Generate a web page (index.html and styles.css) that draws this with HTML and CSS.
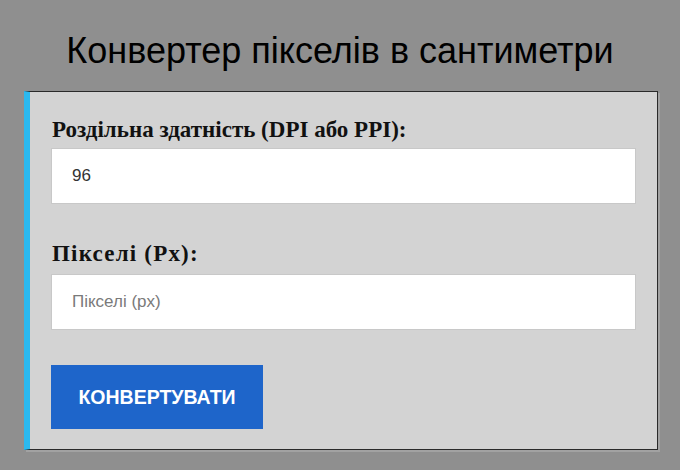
FILE: index.html
```html
<!DOCTYPE html>
<html lang="uk">
<head>
<meta charset="utf-8">
<title>Конвертер пікселів в сантиметри</title>
<link rel="stylesheet" href="styles.css">
</head>
<body>
<h1 class="title">Конвертер пікселів в сантиметри</h1>
<form class="card">
  <label class="label" for="dpi">Роздільна здатність (DPI або PPI):</label>
  <input class="field" id="dpi" type="text" value="96">
  <label class="label label-second" for="px">Пікселі (Px):</label>
  <input class="field" id="px" type="text" placeholder="Пікселі (px)">
  <button class="button" type="button">КОНВЕРТУВАТИ</button>
</form>
</body>
</html>
```
FILE: styles.css
```css
html, body {
  margin: 0;
  padding: 0;
  background: #8f8f8f;
  height: 100%;
  overflow: hidden;
}
body {
  font-family: "Liberation Sans", Arial, sans-serif;
}
.title {
  margin: 0;
  padding: 31px 0 20px;
  text-align: center;
  font-weight: normal;
  font-size: 36px;
  line-height: 40px;
  color: #000;
}
.card {
  display: flex;
  flex-direction: column;
  align-items: flex-start;
  margin: 0 22px 0 24px;
  background: #d3d3d3;
  border: 1px solid #2a2a2a;
  border-left: 6px solid #2bb9ef;
  padding: 26px 21px 20px 21px;
  box-shadow: 2px 2px 0 #a2a2a2;
}
.label {
  font-family: "Liberation Serif", "Times New Roman", serif;
  font-weight: bold;
  font-size: 23px;
  line-height: 24px;
  color: #111;
  margin-bottom: 6px;
  margin-left: 1px;
}
.label-second {
  margin-top: 38px;
  margin-bottom: 8px;
  letter-spacing: 1.2px;
}
.field {
  box-sizing: border-box;
  width: 100%;
  height: 56px;
  border: 1px solid #c8c8c8;
  background: #fff;
  padding: 0 20px;
  font-family: "Liberation Sans", Arial, sans-serif;
  font-size: 17px;
  color: #333;
  outline: none;
}
.field::placeholder {
  color: #7a7a7a;
}
.button {
  margin-top: 35px;
  width: 212px;
  height: 64px;
  border: none;
  background: #1e65ca;
  color: #fff;
  font-family: "Liberation Sans", Arial, sans-serif;
  font-weight: bold;
  font-size: 19.5px;
  padding: 0;
  cursor: pointer;
}
```
